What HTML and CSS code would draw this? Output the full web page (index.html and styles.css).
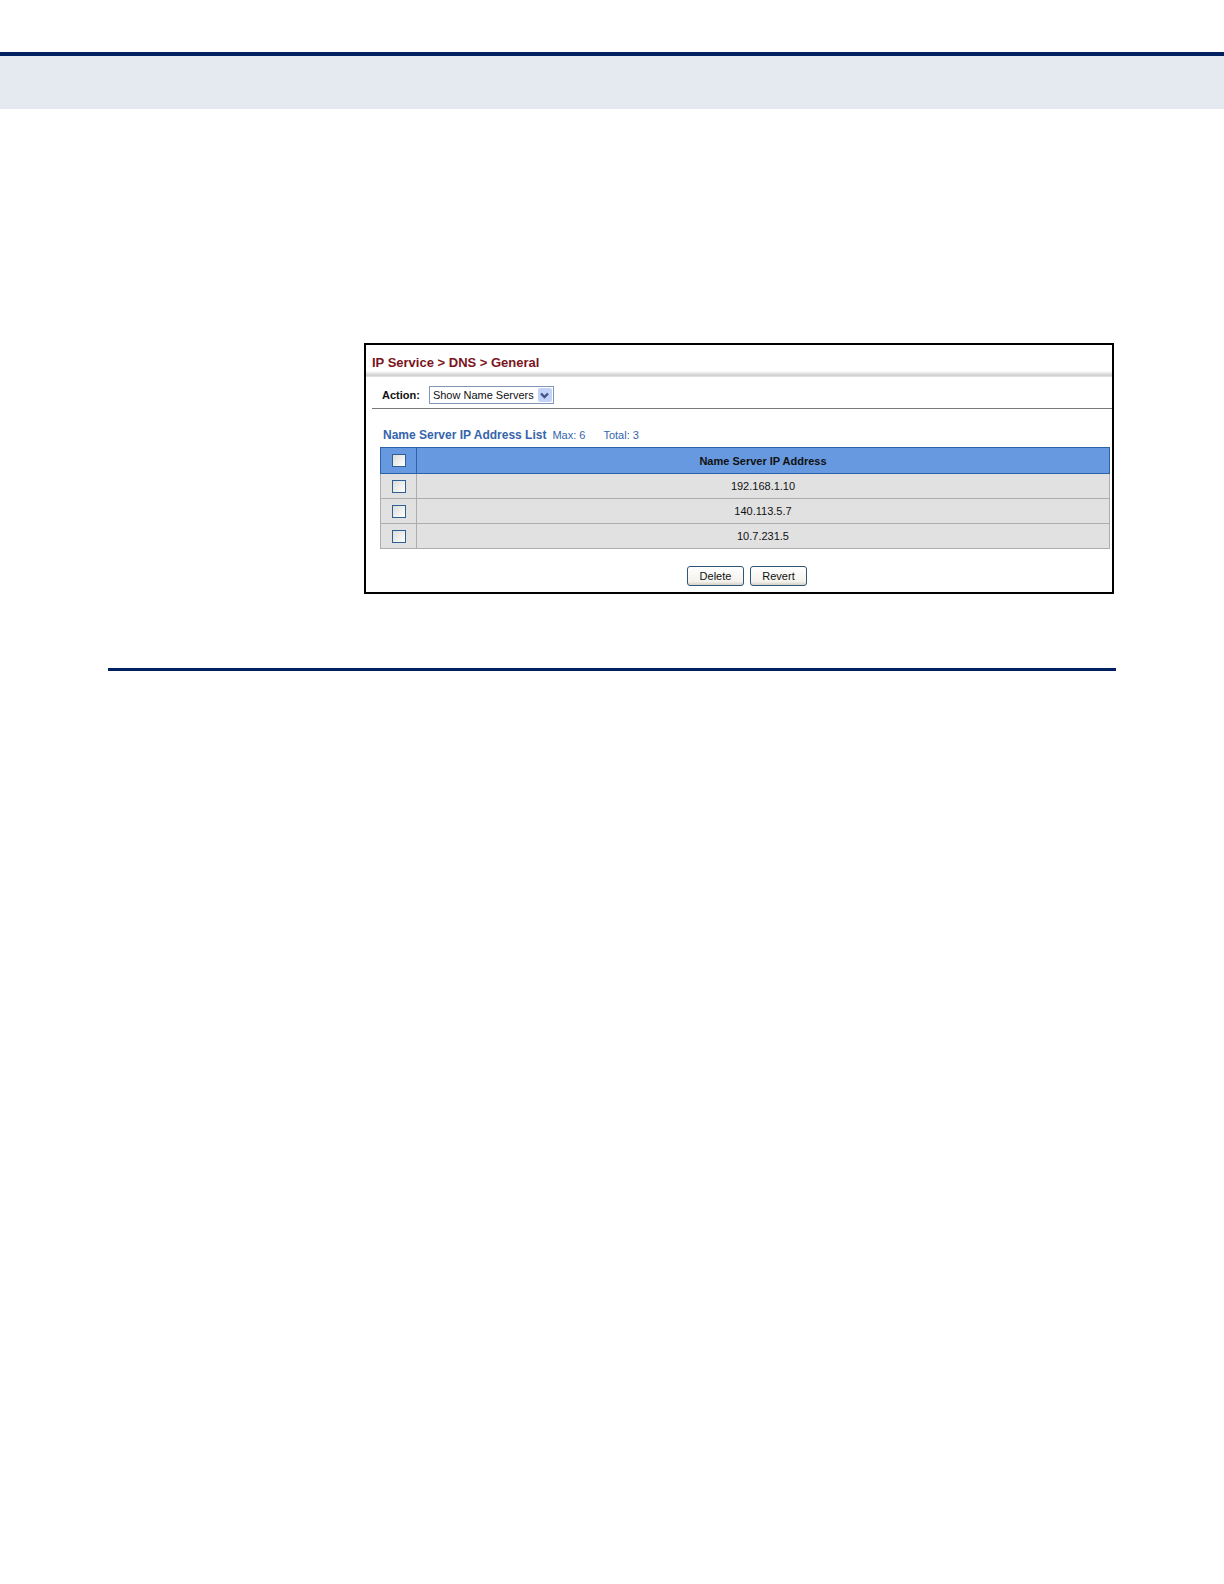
FILE: index.html
```html
<!DOCTYPE html>
<html lang="en">
<head>
  <meta charset="UTF-8" />
  <title>IP Service - DNS - General</title>
  <link rel="stylesheet" href="styles.css">
</head>
<body>
  <header class="page-band"></header>
  <main class="page">
    <form class="panel">
      <h1 class="panel-title">IP Service &gt; DNS &gt; General</h1>
      <div class="action-bar">
        <label for="action">Action:</label>
        <div class="select-box">
          <select id="action">
            <option>Show Name Servers</option>
          </select>
          <span class="arrow">
            <svg width="9" height="7" viewBox="0 0 9 7"><path d="M1 1.5 L4.5 5 L8 1.5" fill="none" stroke="#3f5689" stroke-width="2.4"/></svg>
          </span>
        </div>
      </div>
      <div class="list">
        <div class="list-head">
          <h2>Name Server IP Address List</h2>
          <span class="max">Max: 6</span>
          <span>Total: 3</span>
        </div>
        <table>
          <thead>
            <tr>
              <th class="check"><input type="checkbox" aria-label="Select all"></th>
              <th>Name Server IP Address</th>
            </tr>
          </thead>
          <tbody>
            <tr>
              <td class="check"><input type="checkbox" aria-label="Select 192.168.1.10"></td>
              <td>192.168.1.10</td>
            </tr>
            <tr>
              <td class="check"><input type="checkbox" aria-label="Select 140.113.5.7"></td>
              <td>140.113.5.7</td>
            </tr>
            <tr>
              <td class="check"><input type="checkbox" aria-label="Select 10.7.231.5"></td>
              <td>10.7.231.5</td>
            </tr>
          </tbody>
        </table>
        <div class="buttons">
          <button type="button">Delete</button>
          <button type="reset">Revert</button>
        </div>
      </div>
    </form>
    <hr class="section-rule">
  </main>
</body>
</html>
```
FILE: styles.css
```css
* {
  box-sizing: border-box;
}
body {
  margin: 0;
  background-color: #fff;
  color: #111;
  font-family: "Liberation Sans", Arial, sans-serif;
  font-size: 11px;
}
.page-band {
  height: 57px;
  margin-top: 52px;
  background-color: #e5e9f0;
  border-top: 4px solid #00205f;
}
.page {
  padding: 234px 108px 0;
}
.panel {
  margin: 0 2px 0 256px;
  border: 2px solid #000;
}
.panel-title {
  margin: 0;
  padding: 9px 6px 5px;
  height: 32px;
  font-size: 13px;
  line-height: 18px;
  color: #7a1420;
  background: linear-gradient(#fff, #cfcfcf 70%, #e6e6e6) bottom / 100% 6px no-repeat;
}
.action-bar {
  display: flex;
  align-items: center;
  gap: 9px;
  height: 32px;
  margin-left: 6px;
  padding: 5px 10px 0;
  border-bottom: 1px solid #77777c;
}
.action-bar label {
  font-weight: bold;
}
.select-box {
  position: relative;
}
select {
  display: block;
  appearance: none;
  width: 125px;
  height: 18px;
  margin: 0;
  padding: 0 18px 0 3px;
  border: 1px solid #8296b8;
  border-radius: 0;
  background: #fff;
  color: #111;
  font: inherit;
}
.arrow {
  position: absolute;
  top: 2px;
  right: 2px;
  display: flex;
  align-items: center;
  justify-content: center;
  width: 14px;
  height: 14px;
  border-radius: 2px;
  background-color: #c3d3f8;
  pointer-events: none;
}
.list {
  padding: 14px 2px 6px 14px;
}
.list-head {
  display: flex;
  align-items: center;
  height: 24px;
  padding-left: 3px;
  color: #3564ab;
}
.list-head h2 {
  margin: 0 6px 0 0;
  font-size: 12px;
}
.list-head .max {
  margin-right: 18px;
}
table {
  width: 100%;
  border-collapse: collapse;
}
th, td {
  height: 25px;
  padding: 0;
  border: 1px solid #adadad;
  background-color: #e1e1e1;
  text-align: center;
}
th {
  height: 26px;
  background-color: #6699e0;
  border-color: #2c62a8;
}
.check {
  width: 36px;
}
input[type="checkbox"] {
  appearance: none;
  display: block;
  width: 14px;
  height: 13px;
  margin: 0 auto;
  border: 1px solid #2d5f94;
  background: linear-gradient(135deg, #dcdcd7, #fff);
}
input[type="checkbox"]:checked {
  background: #2d5f94;
}
.buttons {
  display: flex;
  justify-content: center;
  gap: 6px;
  margin: 17px 0 0;
  padding-left: 4px;
}
button {
  width: 57px;
  height: 20px;
  padding: 0;
  border: 1px solid #2f5678;
  border-radius: 3px;
  background: linear-gradient(#fff, #f3f2ec 80%, #d8d2c6);
  color: #111;
  font: inherit;
}
.section-rule {
  height: 3px;
  margin: 74px 0 0;
  border: 0;
  background-color: #00205f;
}
```
